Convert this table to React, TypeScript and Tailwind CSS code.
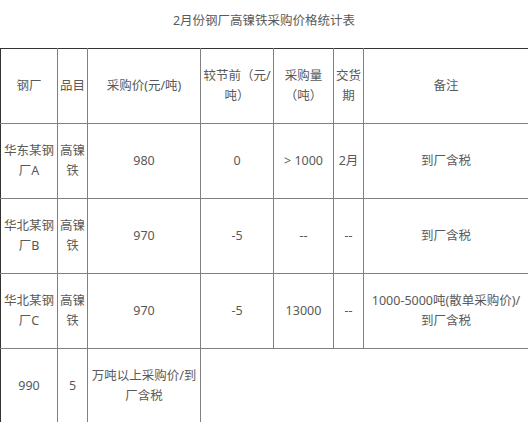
export default function App() {
  const cell = 'border border-[#808080] text-center align-middle p-0 h-[75px] whitespace-nowrap';
  const first = 'border-l-[#333]';
  const last = 'border-r-[#333]';

  return (
    <div
      className="w-[528px] bg-white text-[#595959] text-[12.5px] leading-[20px]"
      style={{ fontFamily: '"Noto Sans", "Noto Sans CJK SC", sans-serif' }}
    >
      <div className="pt-[11px] pb-[17px] text-center">2月份钢厂高镍铁采购价格统计表</div>
      <table className="w-[528px] table-fixed border-collapse">
        <colgroup>
          <col className="w-[57px]" />
          <col className="w-[30px]" />
          <col className="w-[113px]" />
          <col className="w-[73px]" />
          <col className="w-[60px]" />
          <col className="w-[30px]" />
          <col className="w-[165px]" />
        </colgroup>
        <tbody>
          <tr>
            <td className={`${cell} ${first} border-t-[#333]`}>钢厂</td>
            <td className={`${cell} border-t-[#333]`}>品目</td>
            <td className={`${cell} border-t-[#333]`}>采购价(元/吨)</td>
            <td className={`${cell} border-t-[#333]`}>
              较节前（元/
              <br />
              吨）
            </td>
            <td className={`${cell} border-t-[#333]`}>
              采购量
              <br />
              （吨）
            </td>
            <td className={`${cell} border-t-[#333]`}>
              交货
              <br />期
            </td>
            <td className={`${cell} ${last} border-t-[#333]`}>备注</td>
          </tr>
          <tr>
            <td className={`${cell} ${first}`}>
              华东某钢
              <br />
              厂A
            </td>
            <td className={cell}>
              高镍
              <br />铁
            </td>
            <td className={cell}>980</td>
            <td className={cell}>0</td>
            <td className={cell}>&gt; 1000</td>
            <td className={cell}>2月</td>
            <td className={`${cell} ${last}`}>到厂含税</td>
          </tr>
          <tr>
            <td className={`${cell} ${first}`}>
              华北某钢
              <br />
              厂B
            </td>
            <td className={cell}>
              高镍
              <br />铁
            </td>
            <td className={cell}>970</td>
            <td className={cell}>-5</td>
            <td className={cell}>--</td>
            <td className={cell}>--</td>
            <td className={`${cell} ${last}`}>到厂含税</td>
          </tr>
          <tr>
            <td className={`${cell} ${first}`}>
              华北某钢
              <br />
              厂C
            </td>
            <td className={cell}>
              高镍
              <br />铁
            </td>
            <td className={cell}>970</td>
            <td className={cell}>-5</td>
            <td className={cell}>13000</td>
            <td className={cell}>--</td>
            <td className={`${cell} ${last}`}>
              1000-5000吨(散单采购价)/
              <br />
              到厂含税
            </td>
          </tr>
          <tr>
            <td className={`${cell} ${first}`}>990</td>
            <td className={cell}>5</td>
            <td className={cell}>
              万吨以上采购价/到
              <br />
              厂含税
            </td>
          </tr>
        </tbody>
      </table>
    </div>
  );
}
